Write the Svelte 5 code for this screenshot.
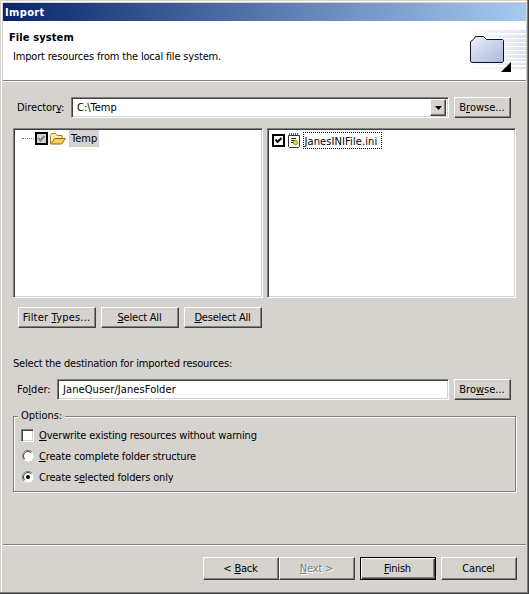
<script>
  const options = [
    { kind: 'check', key: 'O', before: '', after: 'verwrite existing resources without warning', on: false },
    { kind: 'radio', key: 'C', before: '', after: 'reate complete folder structure', on: false },
    { kind: 'radio', key: 'e', before: 'Create s', after: 'lected folders only', on: true }
  ];
  const stripes = [30, 35, 39, 43, 47, 51, 55, 59, 63, 67].map((y) => y - 21);
</script>

<div class="window">
  <div class="title">Import</div>
  <header>
    <div class="heading">
      <h1>File system</h1>
      <p>Import resources from the local file system.</p>
    </div>
    <svg class="banner" width="66" height="59" viewBox="0 0 66 59">
      <defs>
        <linearGradient id="stripe" gradientUnits="userSpaceOnUse" x1="10" x2="66" y1="0" y2="0"><stop offset="0" stop-color="#dce4f4" stop-opacity="0" /><stop offset="1" stop-color="#dce2f1" /></linearGradient>
        <linearGradient id="folder" x2="1" y2="1"><stop offset="0" stop-color="#edf1fa" /><stop offset="1" stop-color="#a9b6db" /></linearGradient>
      </defs>
      {#each stripes as y, i}
        <rect x="10" {y} width="56" height={i < 7 ? 3 : 2} fill="url(#stripe)" />
      {/each}
      <path d="M10.500 40V20.500l3-2 2-3h8l3 3h16l1 1V40l-1 1.500h-31z" fill="url(#folder)" stroke="#10131c" />
      <path d="M41 51h10V41z" fill="#000" />
    </svg>
  </header>

  <main>
    <div class="row directory">
      <span class="label">Director<u>y</u>:</span>
      <div class="field combo">
        <span>C:\Temp</span>
        <div class="drop"><svg width="7" height="4"><path d="M0 0h7L3.5 4z" /></svg></div>
      </div>
      <button class="browse">B<u>r</u>owse...</button>
    </div>

    <div class="panes">
      <div class="pane tree">
        <span class="dots"></span>
        <svg width="13" height="13" viewBox="0 0 13 13"><rect x="1" y="1" width="11" height="11" fill="#d6d3ce" stroke="#000" stroke-width="2" /><path d="M3.5 6l2 2.5L9.5 4" fill="none" stroke="#808080" stroke-width="2" /></svg>
        <svg class="folder" width="16" height="12" viewBox="0 0 16 12"><path d="M.5 10.500V2.500l1-2h4l1.500 2h5v3" fill="#fdf0a0" stroke="#a98225" /><path d="M.8 11l4-5.500h10.600l-3.800 5.500z" fill="#f2cf55" stroke="#8d6716" /></svg>
        <span class="node">Temp</span>
      </div>
      <div class="pane list">
        <svg width="13" height="13" viewBox="0 0 13 13"><rect x="1" y="1" width="11" height="11" fill="#fff" stroke="#000" stroke-width="2" /><path d="M3.500 5.500l2 2.500L9.500 4" fill="none" stroke="#000" stroke-width="2" /></svg>
        <svg class="file" width="13" height="16" viewBox="0 0 13 16"><path d="M.500 3.500h11v11l-1 1h-9l-1-1z" fill="#fffff0" stroke="#333" /><path d="M1.500 1v3m2-3v3m2-3v3m2-3v3m2-3v3" stroke="#333" stroke-width=".8" /><path d="M3 6.500h5M3 8.500h4M3 10.500h3" stroke="#222" /><circle cx="7.500" cy="10.500" r="2.200" fill="#e9d63b" stroke="#8e7d16" stroke-width=".8" /></svg>
        <span class="file-name">JanesINIFile.ini</span>
      </div>
    </div>

    <div class="row tools">
      <button class="filter">Filter <u>T</u>ypes...</button>
      <button><u>S</u>elect All</button>
      <button><u>D</u>eselect All</button>
    </div>

    <p class="destination">Select the destination for imported resources:</p>
    <div class="row target">
      <span class="label">Fo<u>l</u>der:</span>
      <div class="field"><span>JaneQuser/JanesFolder</span></div>
      <button class="browse">Bro<u>w</u>se...</button>
    </div>

    <section class="group">
      <span class="legend">Options:</span>
      {#each options as o}
        <div class="option">
          {#if o.kind === 'check'}
            <span class="box"></span>
          {:else}
            <svg width="12" height="12" viewBox="0 0 12 12"><circle cx="6" cy="6" r="5.500" fill="#fff" /><path d="M2 10A5.500 5.500 0 0 1 10 2" fill="none" stroke="#808080" /><path d="M2.800 9.200A4.500 4.500 0 0 1 9.200 2.800" fill="none" stroke="#404040" />{#if o.on}<circle cx="6" cy="6" r="2" />{/if}</svg>
          {/if}
          <span>{o.before}<u>{o.key}</u>{o.after}</span>
        </div>
      {/each}
    </section>
  </main>

  <footer>
    <button>&lt; <u>B</u>ack</button>
    <button class="disabled"><u>N</u>ext &gt;</button>
    <button class="default"><u>F</u>inish</button>
    <button>Cancel</button>
  </footer>
</div>

<style>
  .window {
    box-sizing: border-box;
    width: 529px;
    height: 594px;
    padding: 3px 3px 2px;
    background: #d6d3ce;
    box-shadow: inset -1px -1px #404040, inset -2px -2px #808080, inset 1px 1px #d6d3ce, inset 2px 2px #fff;
    font: 11px/14px "DejaVu Sans Condensed", "DejaVu Sans", sans-serif;
    color: #000;
    display: flex;
    flex-direction: column;
    white-space: nowrap;
    overflow: hidden;
  }
  u { text-decoration: underline; text-underline-offset: 1px; text-decoration-thickness: 1px; text-decoration-skip-ink: none; }
  p, h1 { margin: 0; font-size: 11px; }
  .title {
    height: 18px;
    padding-left: 2px;
    line-height: 19px;
    color: #fff;
    font-weight: bold;
    letter-spacing: 0.35px;
    background: linear-gradient(90deg, #0a246a, #a6caf0);
  }
  header {
    height: 59px;
    display: flex;
    justify-content: space-between;
    background: #fff;
    border-bottom: 1px solid #808080;
    box-shadow: 0 1px #fff;
  }
  .heading { padding: 10px 0 0 6px; }
  h1 { letter-spacing: 0.1px; }
  .heading p { padding: 5px 0 0 4px; letter-spacing: -0.18px; }
  main { padding: 16px 10px 0; height: 447px; }
  .row { display: flex; align-items: center; }
  .label { padding: 1px 0 0 4px; box-sizing: border-box; letter-spacing: -0.1px; }
  .directory .label { width: 58px; }
  .field, .pane {
    box-sizing: border-box;
    background: #fff;
    border: 1px solid;
    border-color: #808080 #fff #fff #808080;
    box-shadow: inset 1px 1px #404040, inset -1px -1px #d6d3ce;
  }
  .field { height: 21px; display: flex; align-items: center; justify-content: space-between; padding: 2px 2px 2px 5px; }
  .combo { width: 378px; }
  .drop { width: 16px; height: 17px; display: flex; align-items: center; justify-content: center; background: #d6d3ce; box-sizing: border-box; border: 1px solid; border-color: #fff #404040 #404040 #fff; box-shadow: inset -1px -1px #808080; }
  button {
    box-sizing: border-box;
    width: 78px;
    height: 21px;
    padding: 1px 1px 0 0;
    margin: 0;
    font: inherit;
    letter-spacing: -0.2px;
    color: #000;
    background: #d6d3ce;
    border: 1px solid;
    border-color: #fff #404040 #404040 #fff;
    border-radius: 0;
    box-shadow: inset -1px -1px #808080;
    white-space: nowrap;
  }
  button.browse { width: 57px; margin-left: 5px; letter-spacing: 0; padding-right: 1px; }
  button.filter { letter-spacing: 0.2px; }
  .panes { display: flex; gap: 4px; margin-top: 10px; }
  .pane { width: 250px; height: 170px; display: flex; align-items: flex-start; }
  .tree { padding: 3px 0 0 8px; }
  .dots { width: 12px; margin: 6px 1px 0 0; border-top: 1px dotted #808080; }
  .folder { margin: 1px 0 0 2px; }
  .node { background: #d6d3ce; height: 16px; line-height: 16px; margin: -2px 0 0 3px; padding: 1px 2px 0; width: 26px; }
  .list { padding: 5px 0 0 4px; }
  .file { margin: -2px 0 0 3px; }
  .file-name { margin: -2px 0 0 2px; border: 1px dotted #000; height: 15px; line-height: 17px; width: 76px; padding-left: 1px; letter-spacing: 0.1px; }
  .tools { margin-top: 9px; gap: 5px; padding-left: 5px; }
  .destination { margin-top: 28px; padding-top: 1px; letter-spacing: -0.19px; }
  .target { margin-top: 8px; }
  .target .label { width: 44px; letter-spacing: 0; }
  .target .field { width: 392px; letter-spacing: 0.08px; }
  .group { position: relative; box-sizing: border-box; margin-top: 16px; width: 503px; height: 76px; border: 1px solid #808080; box-shadow: 1px 1px #fff, inset 1px 1px #fff; padding: 8px 0 0 7px; }
  .legend { position: absolute; left: 4px; top: -8px; padding: 0 3px; background: #d6d3ce; letter-spacing: -0.05px; }
  .option { height: 21px; display: flex; align-items: center; gap: 5px; letter-spacing: -0.16px; }
  .option svg { margin: -2px 0 0 1px; }
  .box { width: 13px; height: 13px; box-sizing: border-box; background: #fff; border: 1px solid; border-color: #808080 #fff #fff #808080; box-shadow: inset 1px 1px #404040, inset -1px -1px #d6d3ce; margin-top: -1px; }
  footer { flex: 1; display: flex; justify-content: flex-end; padding: 12px 9px 0 0; border-top: 1px solid #808080; box-shadow: inset 0 1px #fff; }
  footer button { width: 76px; height: 23px; }
  .disabled { color: #808080; text-shadow: 1px 1px #fff; }
  .default { margin: 0 5px; border-color: #000; box-shadow: inset 1px 1px #fff, inset -1px -1px #404040, inset -2px -2px #808080; }
</style>
